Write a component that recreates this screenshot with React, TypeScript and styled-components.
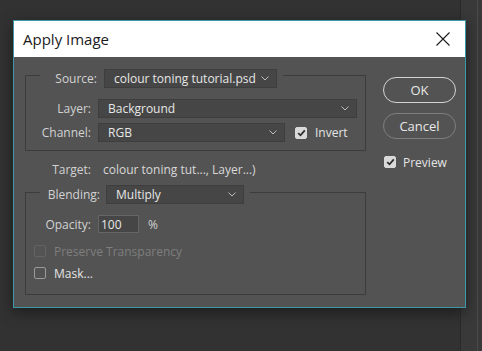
import React from 'react'
import styled, { createGlobalStyle } from 'styled-components'

const GlobalStyle = createGlobalStyle`
  html, body {
    margin: 0;
    padding: 0;
    background: #323232;
  }
  body {
    font-family: "Open Sans", "Noto Sans", sans-serif;
    -webkit-font-smoothing: antialiased;
  }
`

const Desktop = styled.div`
  position: relative;
  display: flex;
  width: 482px;
  height: 351px;
  background: #323232;
  overflow: hidden;
`

const Workspace = styled.div`
  flex: 1;
`

const SidePanel = styled.div`
  width: 21px;
  display: flex;
  justify-content: flex-end;
  background: #393939;
  border-left: 1px solid #2b2b2b;
`

const PanelEdge = styled.div`
  width: 1px;
  margin-right: 4px;
  background: #4a4a4a;
`

const Dialog = styled.div`
  position: absolute;
  left: 13px;
  top: 20px;
  width: 451px;
  border: 1px solid #3f96a8;
  background: #535353;
  box-shadow: 0 4px 14px rgba(0, 0, 0, 0.45);
`

const TitleBar = styled.div`
  height: 36px;
  display: flex;
  align-items: center;
  justify-content: space-between;
  padding-left: 9px;
  background: #ffffff;
  color: #1b1b1b;
  font-size: 15px;
`

const CloseButton = styled.div`
  width: 14px;
  height: 14px;
  margin-right: 15px;
  display: flex;
`

const Body = styled.div`
  display: flex;
  padding: 6px 9px 12px 11px;
`

const LeftColumn = styled.div`
  width: 341px;
  display: flex;
  flex-direction: column;
`

const RightColumn = styled.div`
  width: 73px;
  margin-left: auto;
  padding-top: 14px;
  display: flex;
  flex-direction: column;
`

const Group = styled.fieldset<{ $bottom: number }>`
  margin: 0;
  min-width: 0;
  padding: 0 8px ${p => p.$bottom}px 8px;
  border: 1px solid #3c3c3c;
  display: flex;
  flex-direction: column;
`

const Legend = styled.legend<{ $top: number }>`
  margin-left: 6px;
  padding: ${p => p.$top}px 6px 0 4px;
  display: flex;
  align-items: center;
`

const Row = styled.div<{ $mt: number }>`
  display: flex;
  align-items: center;
  margin-top: ${p => p.$mt}px;
`

const Label = styled.span<{ $w: number }>`
  width: ${p => p.$w}px;
  flex: none;
  text-align: right;
  font-size: 12px;
  color: #d2d2d2;
  white-space: nowrap;
`

const SelectBox = styled.div<{ $w: number; $ml: number }>`
  box-sizing: border-box;
  width: ${p => p.$w}px;
  height: 19px;
  margin-left: ${p => p.$ml}px;
  padding: 0 7px 0 9px;
  display: flex;
  align-items: center;
  justify-content: space-between;
  background: #464646;
  border: 1px solid #3e3e3e;
  font-size: 12px;
  color: #e6e6e6;
  white-space: nowrap;
`

const NumberInput = styled.div`
  box-sizing: border-box;
  width: 41px;
  height: 18px;
  margin-left: 7px;
  padding-left: 2px;
  display: flex;
  align-items: center;
  background: #464646;
  border: 1px solid #666666;
  font-size: 12px;
  color: #e6e6e6;
`

const Unit = styled.span`
  margin-left: 9px;
  font-size: 12px;
  color: #d2d2d2;
`

const TargetRow = styled.div`
  height: 18px;
  margin: 9px 0 2px;
  padding-left: 9px;
  display: flex;
  align-items: center;
`

const TargetValue = styled.span`
  margin-left: 12px;
  font-size: 12px;
  color: #d8d8d8;
`

const CheckRow = styled.div<{ $mt: number; $ml: number }>`
  height: 16px;
  margin-top: ${p => p.$mt}px;
  margin-left: ${p => p.$ml}px;
  display: flex;
  align-items: center;
`

const Box = styled.span<{ $checked?: boolean; $disabled?: boolean }>`
  box-sizing: border-box;
  width: 12px;
  height: 12px;
  flex: none;
  border-radius: 2px;
  display: flex;
  align-items: center;
  justify-content: center;
  background: ${p => (p.$checked ? '#d9d9d9' : 'transparent')};
  border: 1px solid ${p => (p.$checked ? '#d9d9d9' : p.$disabled ? '#636363' : '#9a9a9a')};
`

const CheckText = styled.span<{ $disabled?: boolean; $gap: number }>`
  margin-left: ${p => p.$gap}px;
  font-size: 12px;
  color: ${p => (p.$disabled ? '#7e7e7e' : '#e4e4e4')};
  white-space: nowrap;
`

const PillButton = styled.div<{ $primary?: boolean }>`
  box-sizing: border-box;
  height: 26px;
  margin-bottom: 10px;
  border-radius: 13px;
  display: flex;
  align-items: center;
  justify-content: center;
  border: ${p => (p.$primary ? '1.5px solid #d4d4d4' : '1px solid #7f7f7f')};
  font-size: 13px;
  color: #e8e8e8;
`

const Chevron = () => (
  <svg width="8" height="5" viewBox="0 0 8 5">
    <path d="M0.5 0.5 L4 4 L7.5 0.5" fill="none" stroke="#bdbdbd" strokeWidth="1" />
  </svg>
)

const CheckMark = () => (
  <svg width="9" height="8" viewBox="0 0 9 8">
    <path d="M1.2 4.2 L3.5 6.3 L7.8 1.4" fill="none" stroke="#2e2e2e" strokeWidth="1.8" />
  </svg>
)

function Checkbox({ checked, disabled }: { checked?: boolean; disabled?: boolean }) {
  return <Box $checked={checked} $disabled={disabled}>{checked && <CheckMark />}</Box>
}

function Select({ value, width, ml }: { value: string; width: number; ml: number }) {
  return (
    <SelectBox $w={width} $ml={ml}>
      <span>{value}</span>
      <Chevron />
    </SelectBox>
  )
}

export default function App() {
  return (
    <>
      <GlobalStyle />
      <Desktop>
        <Workspace />
        <SidePanel>
          <PanelEdge />
        </SidePanel>
        <Dialog>
          <TitleBar>
            <span>Apply Image</span>
            <CloseButton>
              <svg width="14" height="14" viewBox="0 0 14 14">
                <path d="M0.5 0.5 L13.5 13.5 M13.5 0.5 L0.5 13.5" stroke="#1b1b1b" strokeWidth="1.1" />
              </svg>
            </CloseButton>
          </TitleBar>
          <Body>
            <LeftColumn>
              <Group $bottom={8}>
                <Legend $top={6}>
                  <Label $w={53}>Source:</Label>
                  <Select value="colour toning tutorial.psd" width={173} ml={7} />
                </Legend>
                <Row $mt={11}>
                  <Label $w={57}>Layer:</Label>
                  <Select value="Background" width={259} ml={7} />
                </Row>
                <Row $mt={5}>
                  <Label $w={57}>Channel:</Label>
                  <Select value="RGB" width={187} ml={7} />
                  <CheckRow $mt={0} $ml={10}>
                    <Checkbox checked />
                    <CheckText $gap={8}>Invert</CheckText>
                  </CheckRow>
                </Row>
              </Group>
              <TargetRow>
                <Label $w={57}>Target:</Label>
                <TargetValue>colour toning tut..., Layer...)</TargetValue>
              </TargetRow>
              <Group $bottom={13}>
                <Legend $top={5}>
                  <Label $w={56}>Blending:</Label>
                  <Select value="Multiply" width={138} ml={6} />
                </Legend>
                <Row $mt={11}>
                  <Label $w={57}>Opacity:</Label>
                  <NumberInput>100</NumberInput>
                  <Unit>%</Unit>
                </Row>
                <CheckRow $mt={10} $ml={0}>
                  <Checkbox disabled />
                  <CheckText $disabled $gap={8}>Preserve Transparency</CheckText>
                </CheckRow>
                <CheckRow $mt={6} $ml={0}>
                  <Checkbox />
                  <CheckText $gap={8}>Mask...</CheckText>
                </CheckRow>
              </Group>
            </LeftColumn>
            <RightColumn>
              <PillButton $primary>OK</PillButton>
              <PillButton>Cancel</PillButton>
              <CheckRow $mt={5} $ml={1}>
                <Checkbox checked />
                <CheckText $gap={7}>Preview</CheckText>
              </CheckRow>
            </RightColumn>
          </Body>
        </Dialog>
      </Desktop>
    </>
  )
}
